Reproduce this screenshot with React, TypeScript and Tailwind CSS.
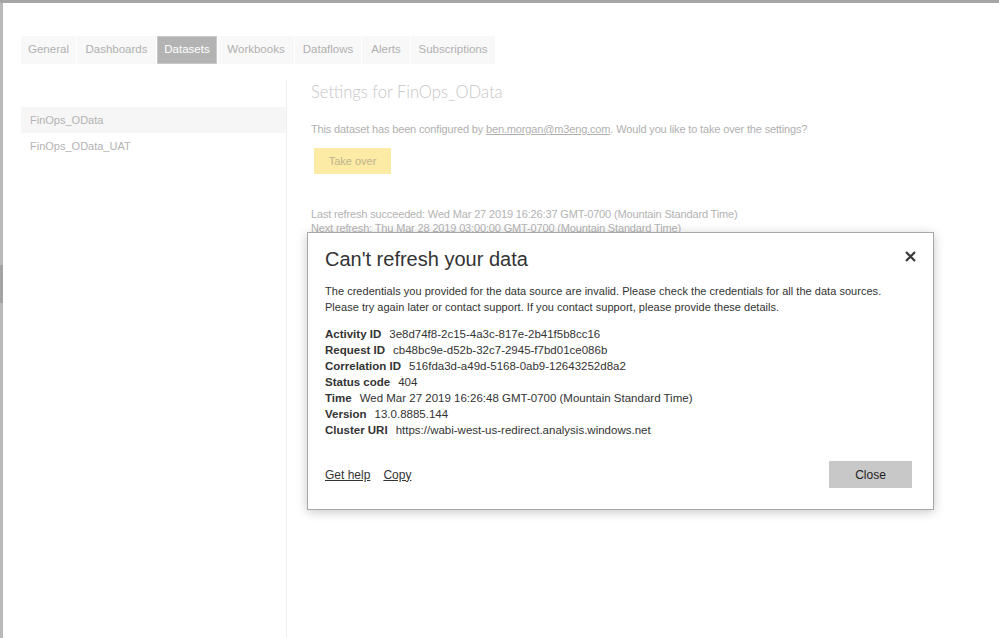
import React from "react";

const tabs: [string, string][] = [
  ["General", "w-[55px]"],
  ["Dashboards", "w-[79px]"],
  ["Datasets", "w-[60px]"],
  ["Workbooks", "w-[76px]"],
  ["Dataflows", "w-[66px]"],
  ["Alerts", "w-[48px]"],
  ["Subscriptions", "w-[84px]"],
];

const details: [string, string][] = [
  ["Activity ID", "3e8d74f8-2c15-4a3c-817e-2b41f5b8cc16"],
  ["Request ID", "cb48bc9e-d52b-32c7-2945-f7bd01ce086b"],
  ["Correlation ID", "516fda3d-a49d-5168-0ab9-12643252d8a2"],
  ["Status code", "404"],
  ["Time", "Wed Mar 27 2019 16:26:48 GMT-0700 (Mountain Standard Time)"],
  ["Version", "13.0.8885.144"],
  ["Cluster URI", "https://wabi-west-us-redirect.analysis.windows.net"],
];

function ErrorDialog() {
  return (
    <div className="absolute left-[304px] top-[229px] w-[627px] h-[278px] bg-white border border-[#a8a8a8] shadow-[0_2px_10px_rgba(0,0,0,0.22)] pl-[17px] pr-[21px] pt-[12px] flex flex-col text-[#333]">
      <div className="flex items-center justify-between">
        <div className="text-[20px] leading-[28px] text-[#333]">Can't refresh your data</div>
        <svg width="11" height="11" viewBox="0 0 11 11" className="mr-[-4px] mt-[-5px]">
          <path d="M1 1 L10 10 M10 1 L1 10" stroke="#3a3a3a" strokeWidth="2.2" />
        </svg>
      </div>
      <div className="mt-[10px] text-[11px] leading-[16px] tracking-[0.03px]">
        The credentials you provided for the data source are invalid. Please check the credentials for all the data sources.
        <br />
        Please try again later or contact support. If you contact support, please provide these details.
      </div>
      <div className="mt-[11px] text-[11.5px] leading-[16px]">
        {details.map(([k, v]) => (
          <div key={k}>
            <span className="font-bold">{k}</span>
            <span className="ml-[8px]">{v}</span>
          </div>
        ))}
      </div>
      <div className="mt-[23px] flex items-center text-[12px]">
        <span className="underline">Get help</span>
        <span className="underline ml-[13px]">Copy</span>
        <div className="ml-auto w-[83px] h-[27px] bg-[#c8c8c8] flex items-center justify-center text-[#222]">Close</div>
      </div>
    </div>
  );
}

export default function App() {
  return (
    <div className="w-[999px] h-[638px] overflow-hidden bg-white flex flex-col" style={{ fontFamily: '"Liberation Sans", Arial, sans-serif' }}>
      <div className="h-[3px] bg-[#a6a6a6] shrink-0" />
      <div className="flex flex-1 min-h-0">
        {/* left edge strip */}
        <div className="w-[3px] bg-[#b9b9b9] shrink-0 flex flex-col">
          <div className="h-[262px]" />
          <div className="h-[38px] bg-[#a3a3a3]" />
        </div>
        <div className="relative flex-1 flex flex-col">
          {/* Tabs */}
          <div className="flex gap-px pl-[18px] pt-[33px] text-[11.5px]">
            {tabs.map(([t, w]) =>
              t === "Datasets" ? (
                <div key={t} className={`${w} h-[28px] flex items-center justify-center bg-[#b3b3b3] text-white border border-[#c9c9c9]`}>
                  {t}
                </div>
              ) : (
                <div key={t} className={`${w} h-[28px] flex items-center justify-center bg-[#f8f8f8] text-[#b0b0b0]`}>
                  {t}
                </div>
              )
            )}
          </div>

          <div className="flex flex-1 mt-[16px]">
            {/* Sidebar */}
            <div className="w-[266px] ml-[18px] border-r border-[#efefef] pt-[27px] text-[11px] text-[#b3b3b3]">
              <div className="h-[26px] bg-[#f6f6f6] flex items-center pl-[9px]">FinOps_OData</div>
              <div className="h-[26px] flex items-center pl-[9px]">FinOps_OData_UAT</div>
            </div>

            {/* Main */}
            <div className="pl-[24px] text-[#b8b8b8] text-[11px] tracking-[-0.15px]">
              <div className="text-[16.6px] leading-[24px] font-light text-[#c6c6c6] tracking-normal" style={{ fontFamily: 'Lato, "Liberation Sans", sans-serif' }}>
                Settings for FinOps_OData
              </div>
              <div className="mt-[17px] leading-[16px] text-[#b0b0b0]">
                This dataset has been configured by <span className="underline">ben.morgan@m3eng.com</span>. Would you like to take over the settings?
              </div>
              <div className="mt-[11px] ml-[3px] w-[77px] h-[26px] bg-[#fbeba5] text-[#beb38d] flex items-center justify-center tracking-normal">
                Take over
              </div>
              <div className="mt-[33px] leading-[14px] text-[#b3b3b3]">
                <div>Last refresh succeeded: Wed Mar 27 2019 16:26:37 GMT-0700 (Mountain Standard Time)</div>
                <div>Next refresh: Thu Mar 28 2019 03:00:00 GMT-0700 (Mountain Standard Time)</div>
              </div>
            </div>
          </div>

          <ErrorDialog />
        </div>
      </div>
    </div>
  );
}
